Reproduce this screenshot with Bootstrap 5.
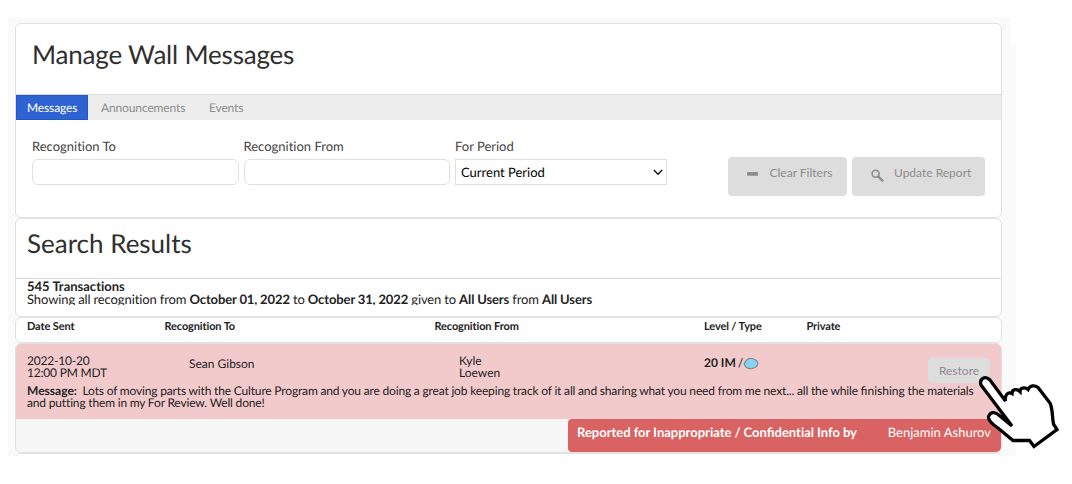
<!DOCTYPE html>
<html lang="en">
<head>
<meta charset="utf-8">
<title>Manage Wall Messages</title>
<link href="https://cdn.jsdelivr.net/npm/bootstrap@5.3.0/dist/css/bootstrap.min.css" rel="stylesheet">
<style>
  body { font-family: Lato, "Liberation Sans", sans-serif; font-size: 13px; line-height: 12px; color: #222; overflow: hidden; height: 484px; text-rendering: geometricPrecision; font-variant-ligatures: none; }
  .backdrop { width: 1008px; height: 438px; margin: 18px 0 0 8px; padding: 5px 14px 0 7px; background: #fafafa;
    clip-path: polygon(0 0, 1003px 0, 1003px 26px, 100% 26px, 100% 100%, 0 100%); }
  .lig { font-variant-ligatures: common-ligatures; letter-spacing: 0; }
  .panel { border: 1px solid #e2e2e2; border-radius: 6px; background: #fff; overflow: hidden; flex: none; }
  .panel-filters { height: 195px; }
  .panel-results { height: 99px; }
  .panel-columns { height: 26px; }
  .panel-entry { height: 110px; background: #f7f7f7; }
  .panel-next { height: 30px; }
  h1, h2 { font-size: 26px; line-height: 32px; color: #2f2f2f; font-weight: 400; margin: 0; white-space: nowrap; }
  h1 { height: 70px; padding: 14px 16px 0; letter-spacing: -.19px; }
  h2 { height: 59px; padding: 8px 11px 0; }
  .tabs { height: 26px; background: #ededed; border-top: 1px solid #dadada; font-size: 12px; letter-spacing: -.13px; }
  .tabs .nav-link { color: #8c8c8c; padding: 0; line-height: 25px; white-space: nowrap; }
  .tabs .nav-link.active { background: #2f63d2; color: #fff; border: 1px solid #2257cb; line-height: 23px; }
  .tab-a { width: 72px; padding: 0 10px !important; }
  .tab-b { margin-left: 13px; width: 108px; }
  .filters { padding: 19px 16px 0; color: #444; }
  .filters label { line-height: 15px; height: 20px; display: block; white-space: nowrap; }
  .filters .form-control { height: 26px; border: 1px solid #e0e0e0; border-radius: 6px; padding: 0; width: 206.5px; }
  .field { margin-right: 5px; }
  .period { width: 212px; height: 26px; border: 1px solid #e0e0e0; color: #000; padding: 0 3px 0 5px; font-size: 13px; }
  .btn-soft { background: #ddd; color: #8c8c8c; border: 0; border-radius: 4px; font-size: 12px; padding: 0; line-height: 15px; white-space: nowrap; }
  .btn-soft:hover { background: #ddd; color: #8c8c8c; }
  .btn-tall { height: 39px; display: flex; align-items: flex-start; padding-top: 8px; }
  .summary { border-top: 1px solid #dadada; padding: 1px 11px 0; white-space: nowrap; }
  .summary div { line-height: 13px; height: 13px; }
  .summary .criteria { line-height: 12px; height: 12px; letter-spacing: -.1px; word-spacing: -.2px; }
  .columns { font-size: 11px; font-weight: 700; line-height: 14px; padding: 2px 11px 0; white-space: nowrap; letter-spacing: -.12px; }
  .c1 { width: 137.5px; } .c2 { width: 270px; } .c3 { width: 269.5px; } .c4 { width: 102.5px; }
  .entry { height: 75px; background: #f3cacb; padding: 11px 11px 0; font-size: 12px; white-space: nowrap; }
  .entry-top { height: 30px; }
  .sent { width: 162px; letter-spacing: -.2px; }
  .message { letter-spacing: -.15px; word-spacing: -.13px; }
  .message b { letter-spacing: 0; }
  .restore { width: 62px; height: 25px; line-height: 25px; }
  .reported { width: 433px; height: 33px; background: #d96363; color: #fff; border-radius: 4px; padding: 6px 10px 0 9px; line-height: 15px; white-space: nowrap; }
  .reported b { word-spacing: -.2px; }
  .hand { left: 975px; top: 371px; }
</style>
</head>
<body>
<main class="backdrop d-flex flex-column">
  <section class="panel panel-filters">
    <h1>Manage Wall Messages</h1>
    <nav class="tabs nav flex-nowrap">
      <a class="nav-link active tab-a" href="#">Messages</a>
      <a class="nav-link tab-b" href="#">Announcements</a>
      <a class="nav-link" href="#">Events</a>
    </nav>
    <form class="filters d-flex">
      <div class="field"><label for="to">Recognition To</label><input id="to" class="form-control"></div>
      <div class="field"><label for="from">Recognition From</label><input id="from" class="form-control"></div>
      <div><label>For Period</label>
        <div class="period d-flex align-items-center justify-content-between"><span>Current Period</span>
          <svg width="10" height="7" viewBox="0 0 10 7" fill="none" stroke="#111" stroke-width="1.4"><path d="M.8 1 5 5.2 9.2 1"/></svg>
        </div>
      </div>
      <div class="d-flex ms-auto" style="gap:5px;padding-top:18px">
        <button type="button" class="btn btn-soft btn-tall" style="width:119px;padding-left:19px">
          <svg width="12" height="14" style="margin:3px 10.5px 0 0"><rect x="0" y="4" width="11" height="3.8" rx=".7" fill="#8d8d8d"/></svg>Clear Filters</button>
        <button type="button" class="btn btn-soft btn-tall" style="width:133px;padding-left:19px">
          <svg width="13" height="13" style="margin:4px 10px 0 0" fill="none" stroke="#8d8d8d"><circle cx="4.6" cy="4.8" r="3.5" stroke-width="1.6"/><path d="m7.3 7.6 4.2 4" stroke-width="2.3" stroke-linecap="round"/></svg>Update Report</button>
      </div>
    </form>
  </section>

  <section class="panel panel-results">
    <h2>Search Results</h2>
    <div class="summary">
      <div><b>545 Transactions</b></div>
      <div class="criteria overflow-hidden">Showing all recognition from <b>October 01, 2022</b> to <b>October 31, 2022</b> given to <b>All Users</b> from <b>All Users</b></div>
    </div>
  </section>

  <section class="panel panel-columns">
    <div class="columns d-flex"><span class="c1">Date Sent</span><span class="c2">Recognition To</span><span class="c3">Recognition From</span><span class="c4">Level / Type</span><span>Private</span></div>
  </section>

  <section class="panel panel-entry">
    <div class="entry">
      <div class="entry-top d-flex">
        <div class="sent">2022-10-20<br>12:00 PM MDT</div>
        <div style="width:270px;padding-top:3px">Sean Gibson</div>
        <div style="width:245px">Kyle<br>Loewen</div>
        <div class="d-flex" style="padding-top:2px"><b>20 IM</b><span style="margin-left:2px">/</span>
          <svg width="16" height="13" viewBox="0 0 16 13" style="margin:0 0 0 0"><path d="M1.2 7C2.4 4 4.2 1.5 7.3 1.3c3.1-.1 7.3 2.5 7.500 4.900-.3 3.300-3.400 5-6.600 5.400C4.800 11.800 1.500 10 1.200 7Z" fill="#86d4f2" stroke="#858b92" stroke-width="1.3"/></svg></div>
        <button type="button" class="btn btn-soft restore ms-auto" style="margin-top:3px">Restore</button>
      </div>
      <div class="message"><b>Message:</b>&nbsp; Lots of moving parts with the Culture Program and you are doing a great job keeping track of it all and sharing what you need from me next... all the while <span class="lig">finishing</span> the materials<br>and putting them in my For Review. Well done!</div>
    </div>
    <div class="reported ms-auto d-flex justify-content-between"><b>Reported for Inappropriate / Con<span class="lig">fi</span>dential Info by</b><span>Benjamin Ashurov</span></div>
  </section>
  <section class="panel panel-next"></section>
</main>

<svg class="hand position-absolute" width="90" height="82" viewBox="975 371 90 82">
  <path d="M1005.500 401C1004.500 395 1008 391.500 1012 393.500 1012 389 1017 388.500 1020 391.500 1020 387.500 1025 387 1028 389.500 1030 385 1035 385 1038 387.500L1050 403C1053 410 1052 417 1053.500 424L1057 429.500 1034 446.500 1029.500 440.500H1013L998 428C992 424 987 419 989 415.500 991 411 996 412 1000 416L1012 426 981 385C979 379 985 375 990 380Z" fill="#fff" stroke="#000" stroke-width="3.300"/>
</svg>
<script src="https://cdn.jsdelivr.net/npm/bootstrap@5.3.0/dist/js/bootstrap.bundle.min.js"></script>
</body>
</html>
